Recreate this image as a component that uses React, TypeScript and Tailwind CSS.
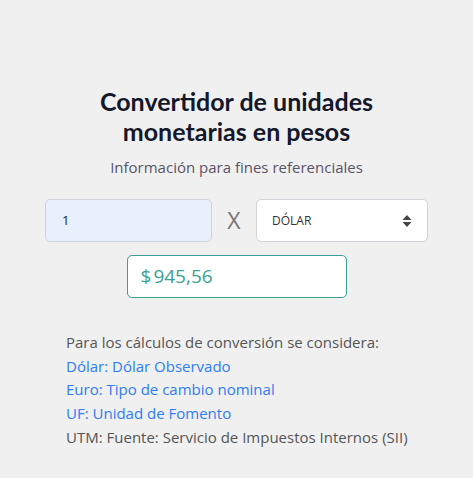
import React from 'react';

export default function App() {
  return (
    <div className="min-h-screen w-full bg-[#f0f0f0] font-['Open_Sans',sans-serif] text-[#555]">
      <main className="w-[473px] pt-[86px] flex flex-col items-center">
        <h1 className="font-['Lato',sans-serif] font-bold text-[25px] leading-[30px] text-[#14182a] text-center">
          Convertidor de unidades
          <br />
          monetarias en pesos
        </h1>
        <p className="mt-[11px] text-[15px] leading-[20px] text-[#5a5566]">Información para fines referenciales</p>

        <div className="mt-[22px] flex items-center w-full px-[45px]">
          <div className="w-[167px] h-[43px] bg-[#e8f0fe] border border-[#ced4da] rounded-[5px] flex items-center pl-[16px] text-[13px] text-[#222]">
            1
          </div>
          <span className="w-[44px] text-center text-[23px] font-normal text-[#777] leading-none">X</span>
          <div className="w-[172px] h-[43px] bg-white border border-[#ced4da] rounded-[5px] flex items-center justify-between pl-[15px] pr-[15px] text-[12px] text-[#333]">
            <span>DÓLAR</span>
            <svg width="10" height="14" viewBox="0 0 10 14" fill="#444">
              <path d="M5 1 L9.5 6 H0.5 Z" />
              <path d="M5 13 L9.5 8 H0.5 Z" />
            </svg>
          </div>
        </div>

        <div className="mt-[13px] w-[220px] h-[43px] bg-white border border-[#3aa194] rounded-[5px] flex items-center pl-[13px] text-[19px] text-[#3aa194]">
          <span className="mr-[2px]">$</span>
          <span>945,56</span>
        </div>

        <div className="mt-[33px] self-start pl-[66px] text-[15px] leading-[23.7px]">
          <p className="text-[#555]">Para los cálculos de conversión se considera:</p>
          <p className="text-[#2f7cf6]">Dólar: Dólar Observado</p>
          <p className="text-[#2f7cf6]">Euro: Tipo de cambio nominal</p>
          <p className="text-[#2f7cf6]">UF: Unidad de Fomento</p>
          <p className="text-[#555]">UTM: Fuente: Servicio de Impuestos Internos (SII)</p>
        </div>
      </main>
    </div>
  );
}
